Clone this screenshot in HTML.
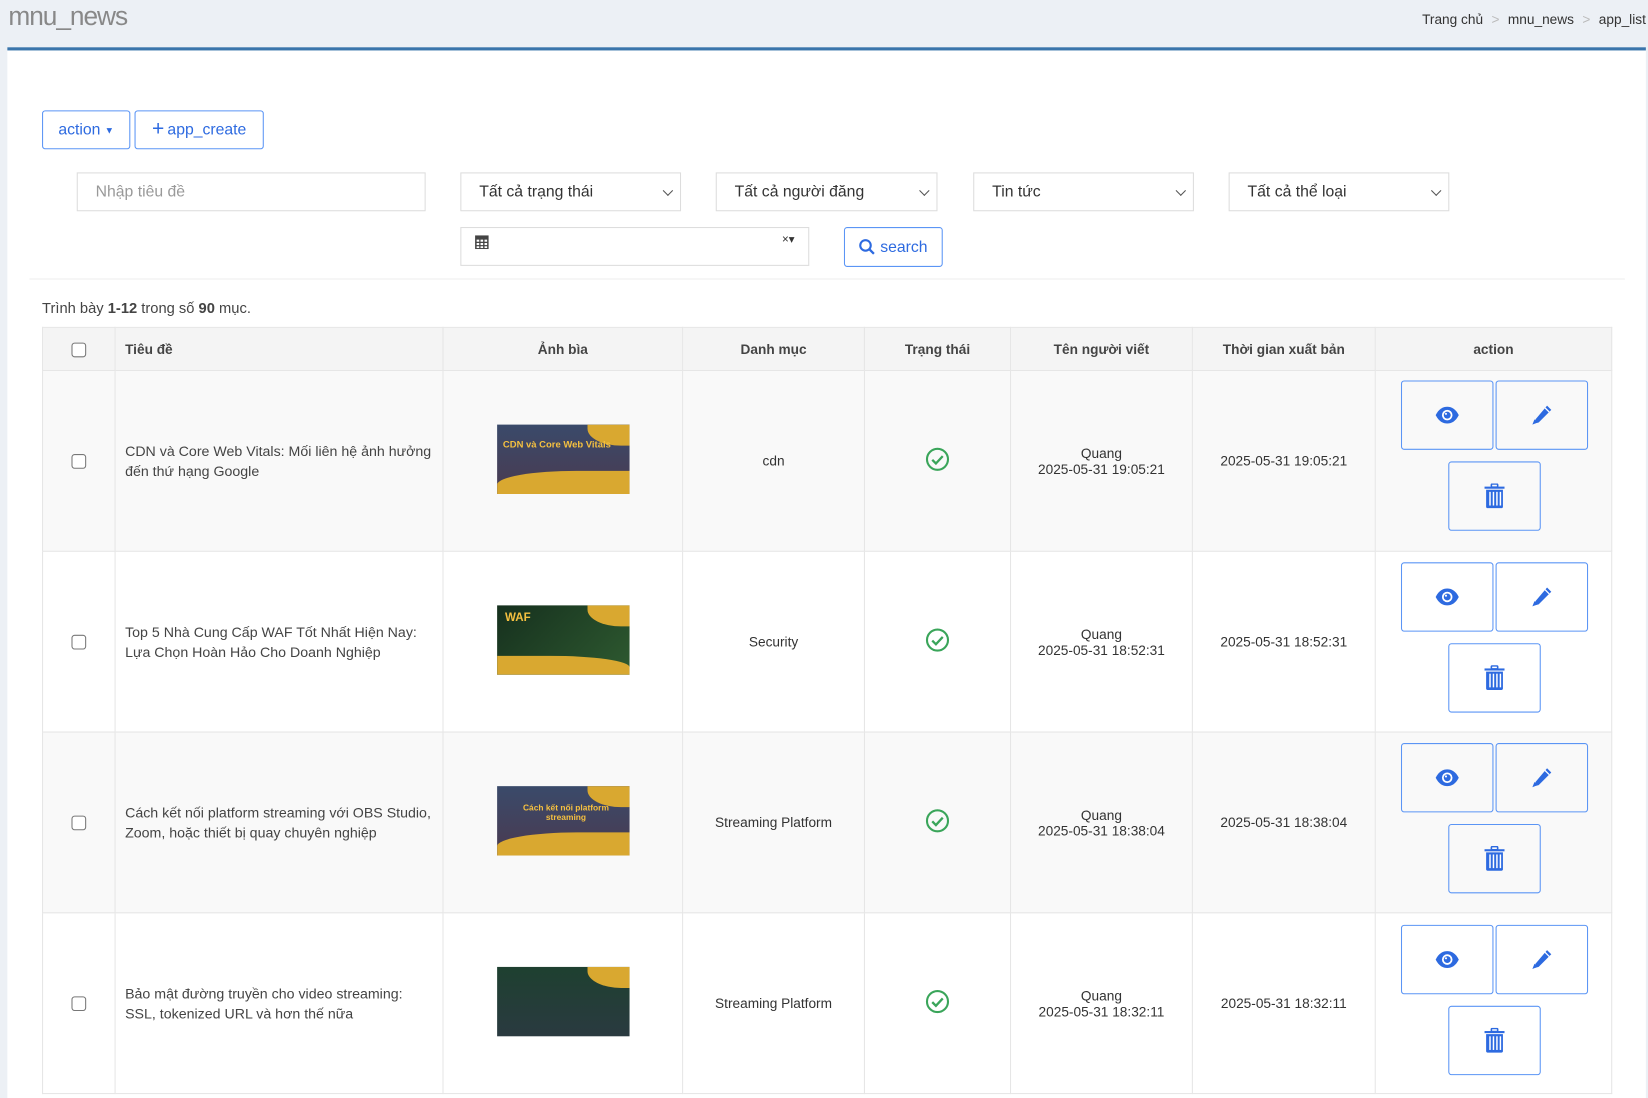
<!DOCTYPE html>
<html><head><meta charset="utf-8"><style>
*{box-sizing:border-box;margin:0;padding:0}
html,body{width:1648px;height:1016px;overflow:hidden;background:#ecf0f5;font-family:"Liberation Sans","Noto Sans CJK JP",sans-serif}
#w{position:absolute;left:0;top:0;width:1568px;height:967px;transform:scale(1.051);transform-origin:0 0}
.a{position:absolute}
.title{left:8px;top:2px;font-size:25px;color:#888;font-weight:300;letter-spacing:-1px}
.bc{right:2px;top:11px;font-size:13px;color:#333}
.bc span{color:#bbb;margin:0 8px}
.panel{left:7px;top:45px;width:1559px;height:1000px;background:#fff;border-top:3px solid #3a75ab}
.btn{position:absolute;border:1px solid #5b95f5;border-radius:3px;color:#2d6ae0;font-size:15px;display:flex;align-items:center;justify-content:center;background:#fff}
.inp{position:absolute;border:1px solid #ddd;height:37px;font-size:15px;color:#333;padding-left:17px;display:flex;align-items:center;background:#fff}
.sel::after{content:"";position:absolute;right:8px;top:13px;width:6px;height:6px;border-right:1.3px solid #555;border-bottom:1.3px solid #555;transform:rotate(45deg)}
table{position:absolute;left:40px;top:311px;width:1494px;border-collapse:collapse;font-size:13px;color:#333}
td,th{border:1px solid #e6e6e6}
th{height:41px;background:#f4f4f4;font-weight:bold;font-size:13px;color:#444}
tr.r td{height:172px;text-align:center;vertical-align:middle}
tr.r:nth-child(even) td{background:#f9f9f9}
tr.r:nth-child(odd) td{background:#fff}
.cb{display:inline-block;width:14px;height:14px;border:1px solid #777;border-radius:3px;background:#fff;vertical-align:middle}
.tt{text-align:left!important;padding:0 9px;line-height:19px;font-size:13.5px;color:#444}
.thumb{display:inline-block;width:126px;height:66px;position:relative;overflow:hidden;background:#2a3a55}
.ab{position:absolute;width:88px;height:66px;border:1.5px solid #5b95f5;border-radius:3px;display:flex;align-items:center;justify-content:center}
</style></head><body><div id="w">
<div class="a title">mnu_news</div>
<div class="a bc">Trang chủ<span>&gt;</span>mnu_news<span>&gt;</span><b style="font-weight:normal">app_list</b></div>
<div class="a panel"></div>
<div class="btn" style="left:40px;top:105px;width:84px;height:37px">action <span style="font-size:9px;margin-left:4px">▼</span></div>
<div class="btn" style="left:128px;top:105px;width:123px;height:37px"><span style="font-size:20px;margin-right:3px">+</span>app_create</div>
<div class="inp" style="left:73px;top:164px;width:332px;color:#999">Nhập tiêu đề</div>
<div class="inp sel" style="left:438px;top:164px;width:210px">Tất cả trạng thái</div>
<div class="inp sel" style="left:681px;top:164px;width:211px">Tất cả người đăng</div>
<div class="inp sel" style="left:926px;top:164px;width:210px">Tin tức</div>
<div class="inp sel" style="left:1169px;top:164px;width:210px">Tất cả thể loại</div>
<div class="inp" style="left:438px;top:216px;width:332px;align-items:flex-start;padding-top:6px;padding-left:13px">
<svg width="13" height="14" viewBox="0 0 13 14"><rect x="0" y="1" width="13" height="13" fill="#444"/><g fill="#fff"><rect x="1.5" y="5" width="2.5" height="2"/><rect x="5.2" y="5" width="2.5" height="2"/><rect x="9" y="5" width="2.5" height="2"/><rect x="1.5" y="8.2" width="2.5" height="2"/><rect x="5.2" y="8.2" width="2.5" height="2"/><rect x="9" y="8.2" width="2.5" height="2"/><rect x="1.5" y="11.3" width="2.5" height="1.7"/><rect x="5.2" y="11.3" width="2.5" height="1.7"/><rect x="9" y="11.3" width="2.5" height="1.7"/></g></svg>
<span style="position:absolute;right:13px;top:4px;font-size:11px;color:#333">×▾</span></div>
<div class="btn" style="left:803px;top:216px;width:94px;height:38px"><svg width="16" height="16" viewBox="0 0 16 16" style="margin-right:4px"><circle cx="6.5" cy="6.5" r="5" fill="none" stroke="#2d6ae0" stroke-width="2"/><path d="M10 10l4.5 4.5" stroke="#2d6ae0" stroke-width="2.2"/></svg>search</div>
<div class="a" style="left:28px;top:265px;width:1518px;height:1px;background:#eee"></div>
<div class="a" style="left:40px;top:285px;font-size:14px;color:#444">Trình bày <b>1-12</b> trong số <b>90</b> mục.</div>
<table>
<tr><th style="width:69px"><span class="cb"></span></th><th style="width:312px;text-align:left;padding-left:9px">Tiêu đề</th><th style="width:228px">Ảnh bìa</th><th style="width:173px">Danh mục</th><th style="width:139px">Trạng thái</th><th style="width:173px">Tên người viết</th><th style="width:174px">Thời gian xuất bản</th><th>action</th></tr>
<tr class="r"><td><span class="cb"></span></td><td class="tt">CDN và Core Web Vitals: Mối liên hệ ảnh hưởng đến thứ hạng Google</td><td><span class="thumb" style="background:linear-gradient(#3a4a6a,#4a3a50)"><span class="a" style="left:0;bottom:0;width:126px;height:22px;background:#d9a830;border-radius:60% 0 0 0"></span><span class="a" style="right:0;top:0;width:40px;height:20px;background:#d9a830;border-radius:0 0 0 80%"></span><span class="a" style="left:6px;top:14px;font-size:9px;color:#f5c040;font-weight:bold">CDN và Core Web Vitals</span></span></td><td>cdn</td><td>✓</td><td>Quang<br>2025-05-31 19:05:21</td><td>2025-05-31 19:05:21</td><td></td></tr>
<tr class="r"><td><span class="cb"></span></td><td class="tt">Top 5 Nhà Cung Cấp WAF Tốt Nhất Hiện Nay: Lựa Chọn Hoàn Hảo Cho Doanh Nghiệp</td><td><span class="thumb" style="background:linear-gradient(135deg,#16301e,#2e5a30)"><span class="a" style="left:0;bottom:0;width:126px;height:18px;background:#d9a830;border-radius:0 60% 0 0"></span><span class="a" style="right:0;top:0;width:40px;height:20px;background:#d9a830;border-radius:0 0 0 80%"></span><span class="a" style="left:8px;top:6px;font-size:11px;color:#f5c040;font-weight:bold">WAF</span></span></td><td>Security</td><td>✓</td><td>Quang<br>2025-05-31 18:52:31</td><td>2025-05-31 18:52:31</td><td></td></tr>
<tr class="r"><td><span class="cb"></span></td><td class="tt">Cách kết nối platform streaming với OBS Studio, Zoom, hoặc thiết bị quay chuyên nghiệp</td><td><span class="thumb" style="background:linear-gradient(#3a4a6a,#4a3a50)"><span class="a" style="left:0;bottom:0;width:126px;height:22px;background:#d9a830;border-radius:60% 0 0 0"></span><span class="a" style="right:0;top:0;width:40px;height:20px;background:#d9a830;border-radius:0 0 0 80%"></span><span class="a" style="left:6px;top:16px;font-size:8px;color:#f5c040;font-weight:bold">Cách kết nối platform streaming</span></span></td><td>Streaming Platform</td><td>✓</td><td>Quang<br>2025-05-31 18:38:04</td><td>2025-05-31 18:38:04</td><td></td></tr>
<tr class="r"><td><span class="cb"></span></td><td class="tt">Bảo mật đường truyền cho video streaming: SSL, tokenized URL và hơn thế nữa</td><td><span class="thumb" style="background:linear-gradient(#1e4030,#2a3a40)"><span class="a" style="right:0;top:0;width:40px;height:20px;background:#d9a830;border-radius:0 0 0 80%"></span></span></td><td>Streaming Platform</td><td>✓</td><td>Quang<br>2025-05-31 18:32:11</td><td>2025-05-31 18:32:11</td><td></td></tr>
</table>
<div id="acts"></div>
<script>
var eye='<svg width="24" height="18" viewBox="0 0 24 18"><path d="M1 9C4 3 8 1 12 1s8 2 11 8c-3 6-7 8-11 8S4 15 1 9z" fill="#2d6ae0"/><circle cx="12" cy="9" r="5" fill="#fff"/><circle cx="12" cy="9" r="3.3" fill="#2d6ae0"/><circle cx="10.8" cy="7.8" r="1" fill="#fff"/></svg>';
var pen='<svg width="22" height="22" viewBox="0 0 22 22"><path d="M16 2l4 4-12 12-4 1 1-4z" fill="#2d6ae0"/><path d="M14 4l4 4" stroke="#fff" stroke-width="1.2"/><path d="M2 20l2-5 3 3z" fill="#2d6ae0"/></svg>';
var tr='<svg width="20" height="24" viewBox="0 0 20 24"><rect x="7" y="0.5" width="6" height="3" rx="1" fill="none" stroke="#2d6ae0" stroke-width="1.5"/><rect x="0.5" y="3" width="19" height="2" fill="#2d6ae0"/><path d="M2 6h16v16a1.5 1.5 0 0 1-1.5 1.5h-13A1.5 1.5 0 0 1 2 22z" fill="#2d6ae0"/><g fill="#fff"><rect x="5" y="8" width="1.4" height="13"/><rect x="8.3" y="8" width="1.4" height="13"/><rect x="11.6" y="8" width="1.4" height="13"/><rect x="14.9" y="8" width="1.4" height="13"/></g></svg>';
var ck='<svg width="24" height="24" viewBox="0 0 24 24"><circle cx="12" cy="12" r="10" fill="none" stroke="#3aa55a" stroke-width="2"/><path d="M7 12.5l3.5 3.5 6.5-7" fill="none" stroke="#3aa55a" stroke-width="2.2"/></svg>';
var h='';
for(var i=0;i<4;i++){var y=362+i*172.5;
h+='<div class="a ab" style="left:1333px;top:'+y+'px">'+eye+'</div><div class="a ab" style="left:1423px;top:'+y+'px">'+pen+'</div><div class="a ab" style="left:1378px;top:'+(y+77)+'px">'+tr+'</div>';}
document.getElementById('acts').innerHTML=h;
document.querySelectorAll('tr.r td:nth-child(5)').forEach(function(t){t.innerHTML=ck;});
</script>
</div></body></html>
